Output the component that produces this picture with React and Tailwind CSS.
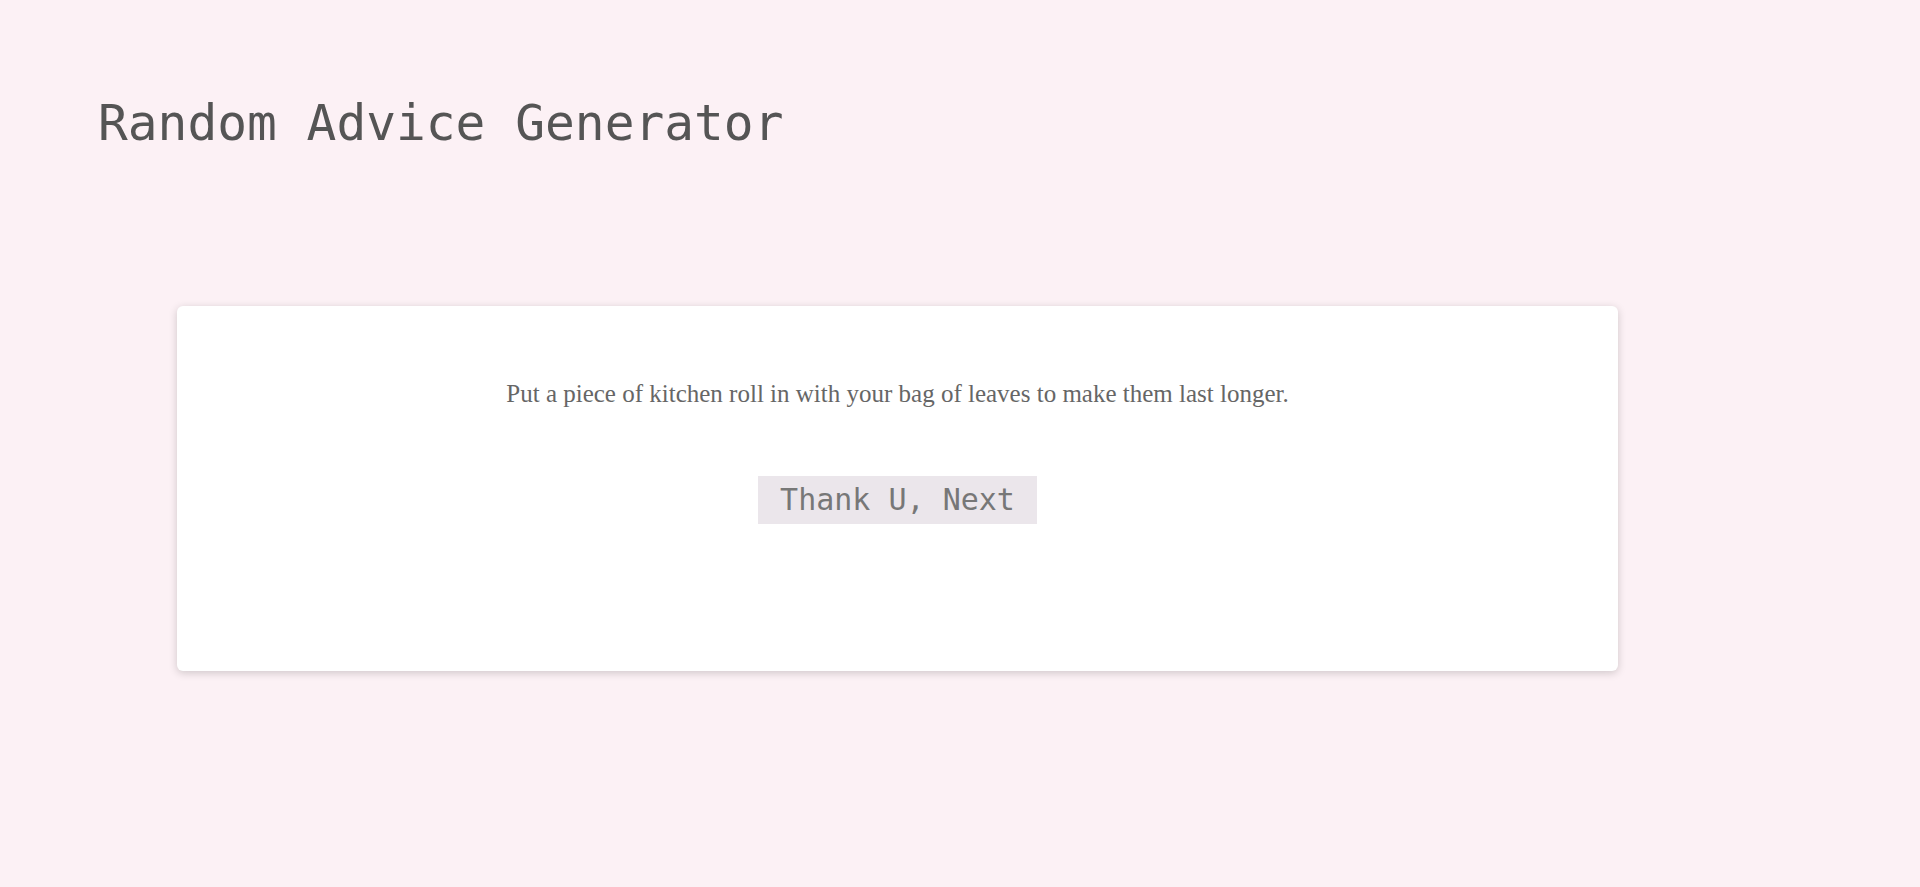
import React from "react";

const App = () => {
  return (
    <div className="min-h-[887px] w-full bg-[#fcf1f5] pt-[93px]">
      <h1 className="pl-[98px] text-[49.5px] leading-[60px] text-[#555] font-['DejaVu_Sans_Mono','Liberation_Mono',monospace] font-light">
        Random Advice Generator
      </h1>

      <div className="ml-[177px] mt-[153px] w-[1441px] h-[365px] bg-white rounded-md shadow-[0_2px_8px_rgba(0,0,0,0.18)] flex flex-col items-center pt-[73px]">
        <p className="text-[25px] leading-[30px] text-[#666] font-['Liberation_Serif',serif]">
          Put a piece of kitchen roll in with your bag of leaves to make them last longer.
        </p>
        <button className="mt-[67px] h-[48px] px-[22px] bg-[#ebe6eb] text-[#777] text-[30px] leading-[48px] font-['DejaVu_Sans_Mono','Liberation_Mono',monospace]">
          Thank U, Next
        </button>
      </div>
    </div>
  );
};

export default App;
